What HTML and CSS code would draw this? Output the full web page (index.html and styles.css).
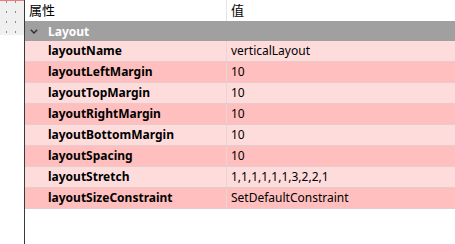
FILE: index.html
```html
<!DOCTYPE html>
<html lang="zh-CN">
<head>
  <meta charset="UTF-8" />
  <title>属性编辑器</title>
  <link rel="stylesheet" href="styles.css">
</head>
<body>
  <div class="form-strip">
    <div class="form-grid"></div>
  </div>

  <div class="prop-tree">
    <div class="tree-header">
      <div class="col-name">属性</div>
      <div class="col-value">值</div>
    </div>

    <div class="group-row">
      <svg class="chevron" width="8" height="5" viewBox="0 0 8 5">
        <path d="M0.8 0.8 L4 4 L7.2 0.8" fill="none" stroke="#333" stroke-width="1.5"/>
      </svg>
      <span>Layout</span>
    </div>

    <div class="prop-row light"><div class="prop-name">layoutName</div><div class="prop-value">verticalLayout</div></div>
    <div class="prop-row dark"><div class="prop-name">layoutLeftMargin</div><div class="prop-value">10</div></div>
    <div class="prop-row light"><div class="prop-name">layoutTopMargin</div><div class="prop-value">10</div></div>
    <div class="prop-row dark"><div class="prop-name">layoutRightMargin</div><div class="prop-value">10</div></div>
    <div class="prop-row light"><div class="prop-name">layoutBottomMargin</div><div class="prop-value">10</div></div>
    <div class="prop-row dark"><div class="prop-name">layoutSpacing</div><div class="prop-value">10</div></div>
    <div class="prop-row light"><div class="prop-name">layoutStretch</div><div class="prop-value">1,1,1,1,1,1,3,2,2,1</div></div>
    <div class="prop-row dark"><div class="prop-name">layoutSizeConstraint</div><div class="prop-value">SetDefaultConstraint</div></div>
  </div>
</body>
</html>
```

FILE: styles.css
```css
/* ---------- base ---------- */
* {
  margin: 0;
  padding: 0;
  box-sizing: border-box;
}
html, body {
  height: 100%;
  background: #fff;
  font-family: "Noto Sans", "Noto Sans CJK SC", sans-serif;
  font-size: 12px;
  color: #000;
  overflow: hidden;
}
body {
  display: flex;
}

/* ---------- left form strip ---------- */
.form-strip {
  width: 24px;
  border-right: 1px solid #3a3a3a;
  flex: none;
  box-sizing: content-box;
}
.form-grid {
  height: 35px;
  background-color: #f0f0f0;
  background-image: radial-gradient(circle, #8c8c8c 0.6px, transparent 0.9px);
  background-size: 9px 10px;
  background-position: 2px -4px;
  border-top: 1px solid #f07a7a;
}

/* ---------- property tree ---------- */
.prop-tree {
  flex: 1;
  display: flex;
  flex-direction: column;
}
.tree-header {
  display: grid;
  grid-template-columns: 202px 1fr;
  height: 21px;
  line-height: 21px;
  font-size: 13px;
}
.tree-header .col-name {
  padding-left: 4px;
  border-right: 1px solid #e5e5e5;
}
.tree-header .col-value {
  padding-left: 4px;
}

.group-row {
  height: 20px;
  background: #a0a0a0;
  display: flex;
  align-items: center;
  padding-left: 5px;
  color: #fff;
  font-weight: bold;
}
.group-row .chevron {
  margin-right: 10px;
}

.prop-row {
  display: grid;
  grid-template-columns: 202px 1fr;
  height: 21px;
  line-height: 20px;
  border-bottom: 1px solid #e4cccc;
}
.prop-row.light {
  background: #ffdcdc;
}
.prop-row.dark {
  background: #ffbfbf;
}
.prop-name {
  padding-left: 23px;
  font-weight: bold;
  border-right: 1px solid #e8d4d4;
}
.prop-value {
  padding-left: 4px;
}
```
